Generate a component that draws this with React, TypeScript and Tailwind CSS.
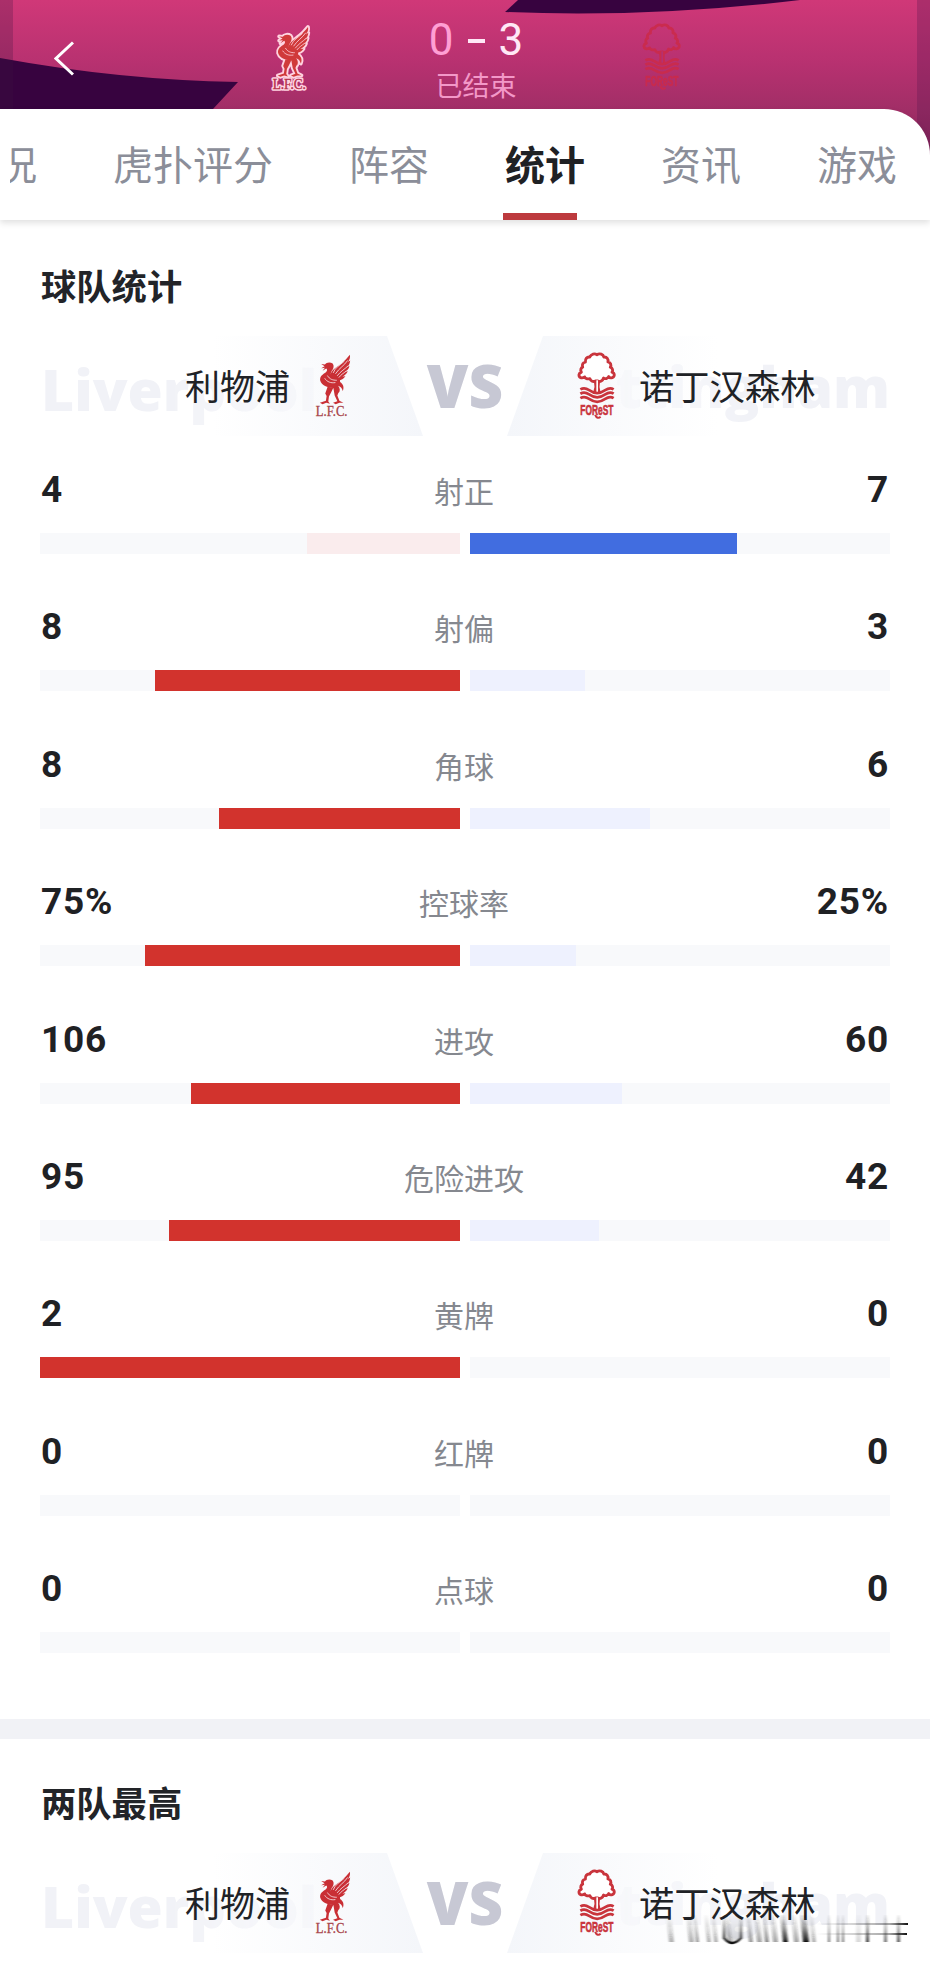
import { clsx } from "clsx";

const stats = [
  { label: "射正", home: "4", away: "7", homePct: 36.4, awayPct: 63.6 },
  { label: "射偏", home: "8", away: "3", homePct: 72.7, awayPct: 27.3 },
  { label: "角球", home: "8", away: "6", homePct: 57.3, awayPct: 42.9 },
  { label: "控球率", home: "75%", away: "25%", homePct: 75, awayPct: 25.2 },
  { label: "进攻", home: "106", away: "60", homePct: 64, awayPct: 36.1 },
  { label: "危险进攻", home: "95", away: "42", homePct: 69.4, awayPct: 30.7 },
  { label: "黄牌", home: "2", away: "0", homePct: 100, awayPct: 0 },
  { label: "红牌", home: "0", away: "0", homePct: 0, awayPct: 0 },
  { label: "点球", home: "0", away: "0", homePct: 0, awayPct: 0 },
];

const tabs = [
  { label: "虎扑评分" },
  { label: "阵容" },
  { label: "统计", active: true },
  { label: "资讯" },
  { label: "游戏" },
];

function LiverBird() {
  return (
    <>
      {/* body and neck */}
      <path d="M76 74 C80 67 92 66 99 71 C104 77 102 86 97 92 C94 97 93 100 94 104 C98 108 104 110 112 108 C119 112 122 118 121 126 C130 132 134 141 129 153 C127 144 122 139 115 137 C121 144 122 152 117 159 C113 150 107 145 100 144 C84 143 66 137 62 122 C60 109 70 103 79 97 C84 92 83 88 80 86 L69 93 L76 84 L65 85 L75 79 L65 73 Z" />
      {/* wing feathers */}
      <path d="M92 106 C96 88 110 84 125 71 C136 62 142 55 150 45 C152 54 149 60 144 67 L151 62 C150 72 147 77 141 82 L149 78 C147 88 142 92 136 96 L144 94 C141 102 134 107 128 110 L137 109 C130 119 121 122 112 120 C103 118 96 113 92 106 Z" />
      {/* legs and feet */}
      <path d="M84 140 L101 143 L95 156 L88 169 L86 184 L91 191 L80 188 L69 192 L61 188 L79 182 L81 168 L77 160 Z M101 143 L114 144 L117 156 L113 166 L119 182 L131 188 L119 188 L108 192 L100 188 L113 183 L105 166 Z" />
    </>
  );
}

function LiverpoolLogo({ className, outlined = false }: { className?: string; outlined?: boolean }) {
  return (
    <svg viewBox="44 40 112 196" className={className} overflow="visible">
      {outlined && (
        <g fill="#ffd3e0" stroke="#ffd3e0" strokeWidth="11" strokeLinejoin="round">
          <LiverBird />
          <text x="46" y="229" fontFamily="Liberation Serif" fontSize="44" textLength="98" lengthAdjust="spacingAndGlyphs">
            L.F.C.
          </text>
        </g>
      )}
      <g fill={outlined ? "#d03a3a" : "#c92f35"}>
        <LiverBird />
      </g>
      <g fill="none" stroke={outlined ? "#ffd3e0" : "#f8eef2"} strokeWidth="2.4" strokeLinecap="round">
        <path d="M143 63 C133 78 119 84 108 101 M144 79 C135 88 124 93 113 107 M139 94 C130 101 124 104 118 112 M133 65 C119 78 107 82 101 98" />
        <path d="M76 116 C82 126 94 130 106 128 M84 108 C90 118 99 121 110 121" />
      </g>
      <text
        x={outlined ? 46 : 49}
        y={outlined ? 229 : 228}
        fontFamily="Liberation Serif"
        fontSize="44"
        fill={outlined ? "#b52f4a" : "#a8444a"}
        stroke={outlined ? "#b52f4a" : "#a8444a"}
        strokeWidth="1"
        textLength={outlined ? 98 : 94}
        lengthAdjust="spacingAndGlyphs"
      >
        L.F.C.
      </text>
    </svg>
  );
}

function ForestLogo({ className, flat = false }: { className?: string; flat?: boolean }) {
  const color = flat ? "#cb2b4b" : "#c9343c";
  return (
    <svg viewBox="36 36 116 202" className={className} overflow="visible">
      <path
        d="M91 122 C84 126 77 123 74 115 C67 117 60 115 59 110 C50 116 41 112 42 103 C43 98 47 97 49 96 C45 88 48 83 53 81 C50 73 54 67 61 66 C60 56 65 50 74 51 C78 41 89 39 95 44 C104 38 114 43 116 51 C125 50 130 57 128 65 C136 67 139 74 135 81 C142 84 144 91 140 96 C149 99 149 109 141 112 C136 114 132 112 130 109 C128 115 119 117 115 113 C112 122 105 126 98 122 Z"
        fill={flat ? "none" : "#fff"}
        stroke={color}
        strokeWidth="8.5"
        strokeLinejoin="round"
      />
      <path d="M86 119 H105 L103 140 L107 160 H83 L88 140 Z" fill={color} />
      <path d="M96 120 V158" stroke={flat ? "#b53070" : "#fff"} strokeWidth="5" />
      <g fill="none" stroke={color} strokeWidth="8">
        <path d="M46 147 C56 141 63 143 72 149 S87 158 96 158 S111 155 120 149 S136 141 145 147" />
        <path d="M46 160 C56 154 63 156 72 162 S87 171 96 171 S111 168 120 162 S136 154 145 160" />
        <path d="M46 173 C56 167 63 169 72 175 S87 184 96 184 S111 181 120 175 S136 167 145 173" />
      </g>
      <text
        x="46"
        y="223"
        fontFamily="Liberation Sans"
        fontWeight="700"
        fontSize="44"
        fill={color}
        stroke={color}
        strokeWidth="2"
        textLength="98"
        lengthAdjust="spacingAndGlyphs"
      >
        FOReST
      </text>
      <path d="M90 223 C94 233 101 234 106 228" fill="none" stroke={color} strokeWidth="6" />
    </svg>
  );
}

function ScoreHeader() {
  return (
    <header className="relative h-[109px] text-center">
      <svg viewBox="0 0 930 160" className="absolute inset-x-0 top-0 h-40 w-full">
        <defs>
          <linearGradient id="sky" x1="0" y1="0" x2="0" y2="1">
            <stop offset="0" stopColor="#d03878" />
            <stop offset="0.4" stopColor="#b73170" />
            <stop offset="0.7" stopColor="#a02e66" />
            <stop offset="1" stopColor="#84245a" />
          </linearGradient>
        </defs>
        <rect width="930" height="160" fill="url(#sky)" />
        <path d="M0 58 Q120 80 238 82 L213 109 V160 H0 Z" fill="#37033f" />
        <path d="M518 0 L505 12 Q650 18 800 0 Z" fill="#37033f" />
        <rect width="13" height="160" fill="#3a1240" opacity="0.25" />
        <rect x="917" width="13" height="160" fill="#5a1650" opacity="0.3" />
      </svg>
      <div className="relative grid h-full grid-cols-[272px_38px_332px_39px_249px]">
        <svg viewBox="0 0 20 34" className="mt-[41px] ml-[54px] h-[35px] w-5" fill="none" stroke="#fff" strokeWidth="3">
          <path d="M19 1 L2 17 L19 33" />
        </svg>
        <LiverpoolLogo outlined className="mt-[25px] h-[67px] w-[38px]" />
        <div className="pt-[9px]">
          <div className="flex justify-center gap-[14px] font-[Roboto] text-[44px] leading-[62px] text-[#ffe8f6]">
            <span className="text-[#ff9fd4]">0</span>
            <span className="mt-[30px] h-1 w-[17px] bg-[#ffe8f6]" />
            <span>3</span>
          </div>
          <p className="-mt-[2px] text-[27px] leading-8 text-[#f398c8]">已结束</p>
        </div>
        <ForestLogo flat className="mt-[23px] h-[68px] w-[39px] opacity-90" />
      </div>
    </header>
  );
}

function TabBar() {
  return (
    <nav className="relative flex h-[111px] items-center rounded-tr-[46px] bg-white text-[40px] text-[#8b8e99] shadow-[0_3px_6px_rgba(0,0,0,0.12)]">
      <span className="ml-[10px] flex w-[27px] justify-end overflow-hidden pb-1">
        <span>况</span>
      </span>
      <div className="ml-[76px] flex h-full gap-[76px]">
        {tabs.map((tab) => (
          <button
            key={tab.label}
            className={clsx("relative h-full pb-1 whitespace-nowrap", tab.active && "font-bold text-[#1f2124]")}
          >
            {tab.label}
            {tab.active && <span className="absolute bottom-0 -left-[2px] h-[7px] w-[74px] bg-[#bd3a3e]" />}
          </button>
        ))}
      </div>
    </nav>
  );
}

function TeamsBanner() {
  return (
    <div className="relative mx-10 grid h-[100px] grid-cols-[383px_84px_383px]">
      <div className="relative flex items-center pl-[145px]">
        <div className="absolute inset-0 bg-linear-to-r from-white from-45% to-[#f4f6fa] [clip-path:polygon(0_0,347px_0,383px_100%,0_100%)]" />
        <span className="absolute top-[10px] left-px [mask-image:linear-gradient(to_right,black_45%,#0006)] font-['Open_Sans'] text-[57px] leading-[86px] font-extrabold text-[#f1f2f7]">
          Liverpool
        </span>
        <span className="relative pb-[3px] text-[35px] leading-[44px] text-[#202226]">利物浦</span>
        <LiverpoolLogo className="relative ml-[24px] h-[66px] w-[38px]" />
      </div>
      <span className="-mx-2 text-center font-['Open_Sans'] text-[60px] leading-[99px] font-extrabold text-[#c7c8d4]">
        VS
      </span>
      <div className="relative flex items-center pl-[70px]">
        <div className="absolute inset-0 bg-linear-to-l from-white from-45% to-[#f4f6fa] [clip-path:polygon(36px_0,100%_0,100%_100%,0_100%)]" />
        <span className="absolute top-[7px] right-0 [mask-image:linear-gradient(to_right,transparent_10%,black_60%)] font-['Open_Sans'] text-[57px] leading-[86px] font-extrabold text-[#f1f2f7]">
          Nottingham
        </span>
        <ForestLogo className="relative h-[68px] w-[39px]" />
        <span className="relative ml-[23px] pb-[3px] text-[35.3px] leading-[44px] text-[#202226]">诺丁汉森林</span>
      </div>
    </div>
  );
}

function StatRow({ label, home, away, homePct, awayPct }: (typeof stats)[number]) {
  return (
    <li className="h-[137.4px]">
      <div className="grid h-[65px] grid-cols-[1fr_auto_1fr] text-[#1f2124]">
        <span className="font-[Roboto] text-[37px] leading-[44px] font-bold tracking-[0.8px]">{home}</span>
        <span className="-ml-[2px] text-[30px] leading-[45px] text-[#85888f]">{label}</span>
        <span className="text-right font-[Roboto] text-[37px] leading-[44px] font-bold tracking-[0.8px]">{away}</span>
      </div>
      <div className="-mx-px grid h-[21px] grid-cols-2 gap-[10px]">
        <div className="flex justify-end bg-[#f8f9fb]">
          <div className={homePct > awayPct ? "bg-[#d2332d]" : "bg-[#faeced]"} style={{ width: `${homePct}%` }} />
        </div>
        <div className="bg-[#f8f9fb]">
          <div
            className={clsx("h-full", awayPct > homePct ? "bg-[#416de0]" : "bg-[#eef1fe]")}
            style={{ width: `${awayPct}%` }}
          />
        </div>
      </div>
    </li>
  );
}

// x, width and strength of each smeared stroke
const streaks = [
  [8, 5, 0.3], [28, 5, 0.35], [35, 3, 0.45], [46, 4, 0.3], [53, 4, 0.3], [67, 4, 0.3], [88, 4, 0.45],
  [96, 5, 0.4], [104, 4, 0.5], [112, 5, 0.4], [122, 5, 0.95], [133, 5, 0.4], [142, 6, 1], [151, 4, 0.3],
  [167, 2, 0.6], [176, 2, 0.6], [181, 2, 0.6], [195, 5, 0.15], [205, 3, 0.8], [223, 3, 0.6], [236, 3, 0.7],
];

function SmearedMark() {
  return (
    <svg viewBox="0 0 250 36" className="absolute right-[19px] bottom-[17px] h-9 w-[250px]">
      <defs>
        <linearGradient id="smear" x1="0" y1="0" x2="0" y2="1">
          <stop offset="0" stopColor="#222" stopOpacity="0.05" />
          <stop offset="0.5" stopColor="#222" stopOpacity="0.5" />
          <stop offset="1" stopColor="#111" />
        </linearGradient>
        <linearGradient id="dash" x1="0" y1="0" x2="1" y2="0">
          <stop offset="0" stopColor="#222" stopOpacity="0" />
          <stop offset="0.8" stopColor="#222" stopOpacity="0.4" />
          <stop offset="1" stopColor="#111" />
        </linearGradient>
        <filter id="soft">
          <feGaussianBlur stdDeviation="0.9 0.3" />
        </filter>
      </defs>
      <g filter="url(#soft)">
        {streaks.map(([x, w, opacity]) => (
          <path
            key={x}
            d={x < 160 ? `M${x - 3} 1 h${w} l3 27 h-${w} Z` : `M${x} 1 h${w} v27 h-${w} Z`}
            fill="url(#smear)"
            opacity={opacity}
          />
        ))}
        <path d="M63 2 V24 Q71 34 80 24 V2" fill="url(#smear)" fillOpacity="0.15" stroke="url(#smear)" strokeWidth="2.5" />
      </g>
      <rect x="155" y="9" width="92" height="2" fill="url(#dash)" />
      <rect x="155" y="19" width="91" height="2" fill="url(#dash)" />
    </svg>
  );
}

export default function App() {
  return (
    <main className="relative h-[1967px] w-[930px] overflow-hidden bg-white font-['Noto_Sans_CJK_SC',sans-serif]">
      <ScoreHeader />
      <TabBar />
      <section className="h-[1499px] pt-[39px]">
        <h2 className="mb-[25px] ml-[41px] text-[35.3px] leading-[52px] font-bold text-[#222428]">球队统计</h2>
        <TeamsBanner />
        <ul className="mx-[41px] mt-[32px]">
          {stats.map((stat) => (
            <StatRow key={stat.label} {...stat} />
          ))}
        </ul>
      </section>
      <div className="h-5 bg-[#f1f2f6]" />
      <section className="pt-[37px]">
        <h2 className="mb-[25px] ml-[41px] text-[35.3px] leading-[52px] font-bold text-[#222428]">两队最高</h2>
        <TeamsBanner />
      </section>
      <SmearedMark />
    </main>
  );
}
